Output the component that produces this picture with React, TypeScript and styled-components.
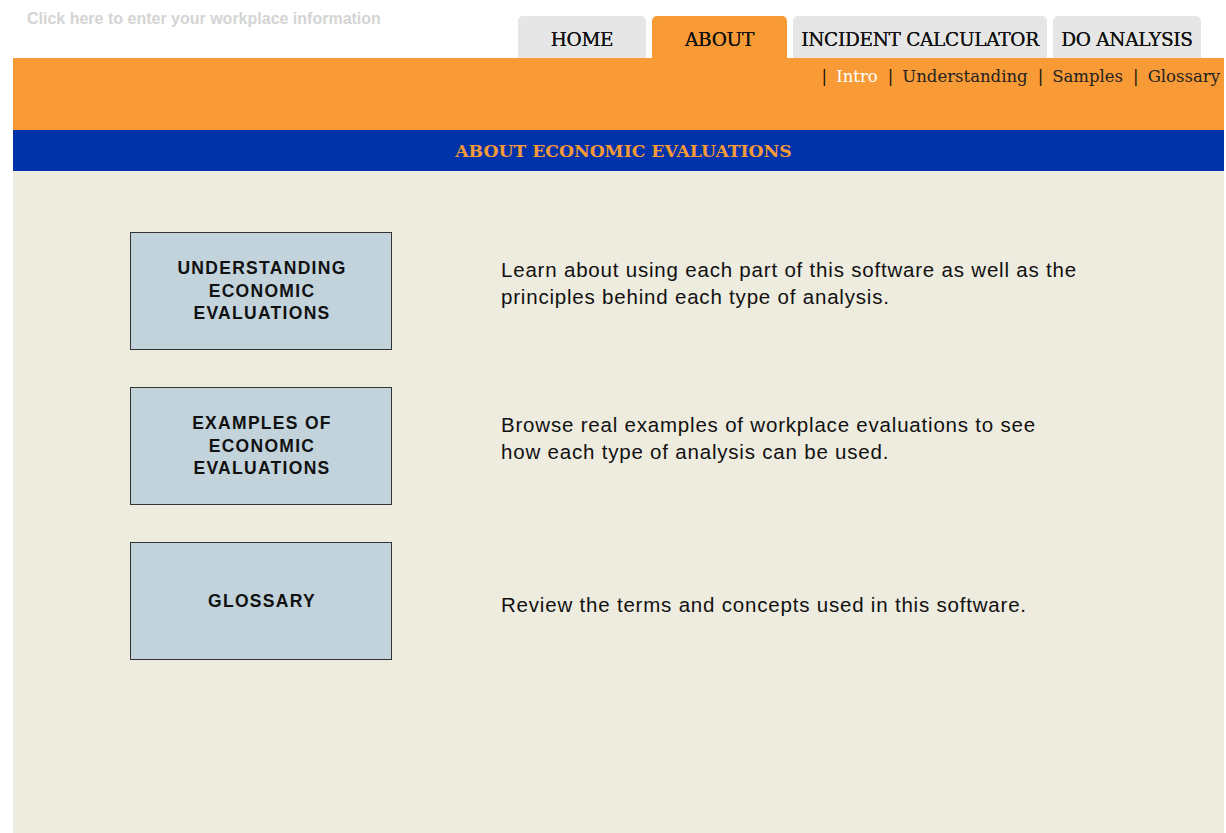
import React from "react";
import styled, { createGlobalStyle } from "styled-components";

const GlobalStyle = createGlobalStyle`
  html, body {
    margin: 0;
    padding: 0;
    background: #ffffff;
  }
  body {
    font-family: "Liberation Sans", Arial, sans-serif;
  }
`;

const slab = `"DejaVu Serif", "Liberation Serif", serif`;

const Page = styled.div`
  margin: 0 2px 0 13px;
  height: 833px;
  display: flex;
  flex-direction: column;
`;

const Header = styled.div`
  height: 58px;
  display: flex;
  align-items: flex-end;
  justify-content: space-between;
`;

const WorkplaceClip = styled.div`
  align-self: flex-start;
  margin-top: 10px;
  height: 20px;
  overflow: hidden;
`;

const WorkplaceLink = styled.a`
  display: block;
  margin: 0 0 0 14px;
  font-family: "Liberation Sans", Arial, sans-serif;
  font-weight: bold;
  font-size: 16px;
  line-height: 18px;
  color: #d4d4d4;
  text-decoration: none;
  cursor: pointer;
`;

const Tabs = styled.nav`
  display: flex;
  gap: 6px;
  margin-right: 23px;
`;

const Tab = styled.a<{ $active?: boolean; $w: number }>`
  width: ${(p) => p.$w}px;
  height: 42px;
  box-sizing: border-box;
  padding-top: 13px;
  border-radius: 5px 5px 0 0;
  background: ${(p) => (p.$active ? "#f89a35" : "#e6e6e6")};
  color: #111111;
  font-family: ${slab};
  font-size: 18.5px;
  text-align: center;
  white-space: nowrap;
  letter-spacing: -0.3px;
  text-shadow: 0 0 0.4px #111111;
  cursor: pointer;
`;

const SubBar = styled.div`
  height: 72px;
  background: #f89a35;
  display: flex;
  justify-content: flex-end;
  align-items: flex-start;
  padding: 9px 4px 0 0;
  box-sizing: border-box;
  font-family: ${slab};
  font-size: 16.5px;
`;

const SubLink = styled.span<{ $current?: boolean }>`
  color: ${(p) => (p.$current ? "#ffffff" : "#222222")};
  cursor: pointer;
`;

const Sep = styled.span`
  margin: 0 9px 0 10px;
  color: #111111;
`;

const TitleBar = styled.div`
  height: 41px;
  background: #0033aa;
  display: flex;
  align-items: center;
  justify-content: center;
  font-family: ${slab};
  font-weight: bold;
  font-size: 17.2px;
  color: #f89a35;
  padding: 0 0 0 10px;
  box-sizing: border-box;
`;

const Content = styled.main`
  flex: 1;
  background: #eeebdf;
  padding: 61px 0 0 117px;
  display: grid;
  grid-template-columns: 262px 1fr;
  grid-auto-rows: 118px;
  row-gap: 37px;
  column-gap: 109px;
  align-content: start;
`;

const SectionButton = styled.a`
  box-sizing: border-box;
  border: 1px solid #333333;
  background: #c2d3dc;
  display: flex;
  align-items: center;
  justify-content: center;
  text-align: center;
  font-family: "Liberation Sans", Arial, sans-serif;
  font-weight: bold;
  font-size: 17.5px;
  line-height: 22.5px;
  letter-spacing: 1.3px;
  color: #111111;
  padding: 0 0 0 2px;
  cursor: pointer;
`;

const Blurb = styled.p<{ $shift: number }>`
  margin: 0;
  align-self: center;
  transform: translateY(${(p) => p.$shift}px);
  font-family: "Liberation Sans", Arial, sans-serif;
  font-size: 20.5px;
  line-height: 27px;
  letter-spacing: 0.8px;
  color: #111111;
`;

const sections = [
  {
    label: ["UNDERSTANDING", "ECONOMIC", "EVALUATIONS"],
    text: [
      "Learn about using each part of this software as well as the",
      "principles behind each type of analysis.",
    ],
    shift: -8,
  },
  {
    label: ["EXAMPLES OF", "ECONOMIC", "EVALUATIONS"],
    text: [
      "Browse real examples of workplace evaluations to see",
      "how each type of analysis can be used.",
    ],
    shift: -8,
  },
  {
    label: ["GLOSSARY"],
    text: ["Review the terms and concepts used in this software."],
    shift: 3,
  },
];

const subLinks = ["Intro", "Understanding", "Samples", "Glossary"];

export default function App() {
  return (
    <>
      <GlobalStyle />
      <Page>
        <Header>
          <WorkplaceClip>
            <WorkplaceLink>Click here to enter your workplace information</WorkplaceLink>
          </WorkplaceClip>
          <Tabs>
            <Tab $w={128}>HOME</Tab>
            <Tab $w={135} $active>
              ABOUT
            </Tab>
            <Tab $w={254}>INCIDENT CALCULATOR</Tab>
            <Tab $w={148}>DO ANALYSIS</Tab>
          </Tabs>
        </Header>
        <SubBar>
          {subLinks.map((l, i) => (
            <React.Fragment key={l}>
              <Sep>|</Sep>
              <SubLink $current={i === 0}>{l}</SubLink>
            </React.Fragment>
          ))}
        </SubBar>
        <TitleBar>ABOUT ECONOMIC EVALUATIONS</TitleBar>
        <Content>
          {sections.map((s) => (
            <React.Fragment key={s.label.join(" ")}>
              <SectionButton>
                <span>
                  {s.label.map((line) => (
                    <div key={line}>{line}</div>
                  ))}
                </span>
              </SectionButton>
              <Blurb $shift={s.shift}>
                {s.text.map((line, i) => (
                  <React.Fragment key={line}>
                    {i > 0 && <br />}
                    {line}
                  </React.Fragment>
                ))}
              </Blurb>
            </React.Fragment>
          ))}
        </Content>
      </Page>
    </>
  );
}
